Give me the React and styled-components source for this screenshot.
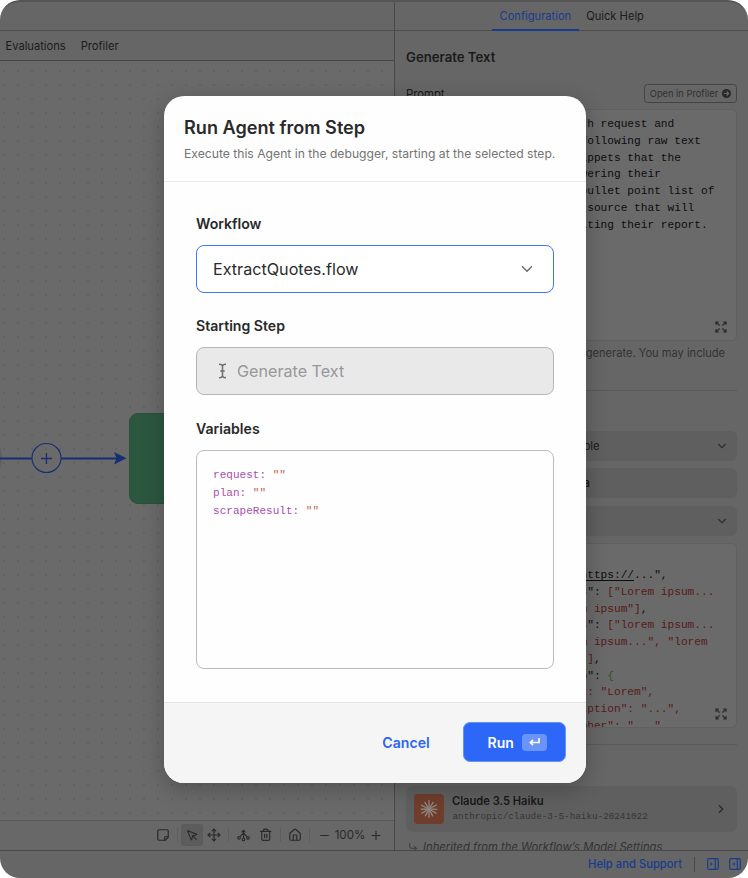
import React from "react";
import styled, { createGlobalStyle, css } from "styled-components";
import {
  ChevronDown, ChevronRight, StickyNote, MousePointer, Move, Trash2, House,
  Minus, Plus, CornerDownRight,
} from "lucide-react";

const Global = createGlobalStyle`
  * { box-sizing: border-box; }
  body { margin: 0; background: #fff; font-family: Inter, sans-serif; color: #181818; }
`;

const mono = css`font-family: "Liberation Mono", monospace; white-space: pre;`;

const Window = styled.div`
  position: relative;
  width: 748px;
  height: 878px;
  display: flex;
  flex-direction: column;
  overflow: hidden;
  border-radius: 20px;
  background: #666;
  border-top: 2px solid #555;
`;
const Columns = styled.div`display: flex; height: 848px;`;
const Left = styled.div`
  width: 395px; display: flex; flex-direction: column;
  border-right: 1px solid #484848;
`;
const TopBar = styled.div`height: 29px; border-bottom: 1px solid #4d4d4d;`;
const NavTabs = styled.nav`
  height: 30px; display: flex; align-items: center; gap: 15px; padding-left: 5.5px;
  border-bottom: 1px solid #484848; font-size: 11.15px; color: #1b1b1b;
`;
const Canvas = styled.div`
  position: relative; flex: 1; overflow: hidden; background-color: #6a6a6a;
  background-image: radial-gradient(circle at 4px 10px, #5f5f5f 0.6px, transparent 1.1px);
  background-size: 14px 14px;
`;
const PrevNode = styled.div`
  position: absolute; left: -58px; top: 367px; width: 60px; height: 60px;
  border-radius: 50%; background: #5f5f5f;
`;
const StepNode = styled.div`
  position: absolute; left: 128.5px; top: 351.5px; width: 91px; height: 91px;
  border-radius: 9px; background: #2c573f; border: 1px solid #28503a;
`;
const Edge = styled.svg`position: absolute; left: 0; top: 377px;`;
const Toolbar = styled.div`
  height: 30px; border-top: 1px solid #585858; display: flex; align-items: center;
  padding-left: 156px; padding-bottom: 1px; color: #292929; font-size: 11.6px; background: #686868;
  svg { display: block; }
`;
const Tool = styled.div`
  width: ${(p) => p.$w || 22}px; height: 22px; display: flex; align-items: center;
  justify-content: center; border-radius: 3px; flex: none;
  margin-left: ${(p) => p.$gap || 0}px;
  background: ${(p) => (p.$active ? "#5c5c5c" : "transparent")};
`;
const NoteIcon = styled(StickyNote)`transform: scaleY(-1);`;
const Sep = styled.div`
  width: 1px; height: 14px; background: #5e5e5e; flex: none;
  margin-left: ${(p) => p.$gap || 0}px;
`;

const Panel = styled.aside`width: 353px; display: flex; flex-direction: column;`;
const PanelTabs = styled.div`
  height: 29px; display: flex; padding-left: 97px; border-bottom: 1px solid #4d4d4d;
  font-size: 11.15px;
`;
const PanelTab = styled.div`
  height: 29px; line-height: 28px; padding: 0 7.5px; white-space: nowrap;
  color: ${(p) => (p.$active ? "#173c8e" : "#1b1b1b")};
  border-bottom: ${(p) => (p.$active ? "2px solid #173c8e" : "none")};
`;
const PanelBody = styled.div`
  height: 819px; overflow: hidden; padding: 0 11px; display: flex; flex-direction: column;
  > * { flex: none; }
`;
const PanelTitle = styled.h2`margin: 17px 0 0; font-size: 13.2px; line-height: 18px; font-weight: 600; color: #1b1b1b;`;
const PromptRow = styled.div`
  margin-top: 18px; height: 18px; display: flex; align-items: center;
  justify-content: space-between; font-size: 11.3px;
`;
const PromptLabel = styled.span`padding-top: 1px;`;
const ProfilerButton = styled.button`
  width: 93px; height: 19px; padding: 0; display: flex; align-items: center; justify-content: center;
  gap: 4px; border: 1px solid #444; border-radius: 3.5px; background: none;
  font: 9.3px Inter, sans-serif; color: #303030; white-space: nowrap;
`;
const Editor = styled.div`
  position: relative; height: ${(p) => p.$h}px; margin-top: ${(p) => p.$mt}px;
  padding: ${(p) => p.$pt}px 0 0 173.5px; overflow: hidden; background: #6a6a6a;
  border: 1px solid #606060; border-radius: 5px;
`;
const CodeLine = styled.div`${mono} height: 16.75px; font-size: 11.17px; line-height: 16.75px; color: #0d0d0d;`;
const ExpandIcon = styled.svg`position: absolute; right: 9px; bottom: 7px;`;
const Help = styled.p`
  margin: 3px 12px 0; text-align: right; font-size: 11.1px; line-height: 18px; color: #333;
`;
const Rule = styled.div`height: 1px; background: #595959; margin-top: ${(p) => p.$mt}px;`;
const Select = styled.div`
  height: 30px; margin-top: ${(p) => p.$mt}px; border-radius: 6px; background: #5f5f5f;
  display: flex; align-items: center; padding: 0 8px 0 177.5px; justify-content: space-between;
  font-size: 11.2px; font-weight: ${(p) => (p.$bold ? 600 : 400)}; color: #1a1a1a;
  svg { color: #303030; }
`;
const Red = styled.span`color: #571b1b;`;
const Green = styled.span`color: #275427;`;
const Link = styled.span`text-decoration: underline; text-underline-offset: 2px;`;
const ModelCard = styled.div`
  height: 46px; margin-top: 41px; border-radius: 7px; background: #5f5f5f;
  display: flex; align-items: center; padding: 0 9px 0 8px;
`;
const Logo = styled.div`
  width: 30px; height: 30px; border-radius: 4px; background: #6f3d2c;
  display: flex; align-items: center; justify-content: center;
`;
const ModelText = styled.div`flex: 1; margin: -1px 0 0 8px;`;
const ModelName = styled.div`font-size: 11.15px; line-height: 15px; font-weight: 600;`;
const ModelId = styled.div`${mono} margin-left: 0.5px; font-size: 9.3px; line-height: 15px; color: #363636;`;
const Inherited = styled.div`
  display: flex; align-items: center; gap: 5px; height: 18px; margin: 6px 0 0 2px;
  font-size: 11.25px; font-style: italic; color: #333;
`;
const StatusBar = styled.footer`
  height: 28px; border-top: 1px solid #484848; display: flex; align-items: center;
  justify-content: flex-end; padding: 0 7px 1px 0; color: #173c8e; font-size: 11.25px; font-weight: 500;
`;
const StatusSep = styled.div`width: 1px; height: 15px; background: #484848; margin: 0 12px 0 12px;`;
const IconGap = styled.div`width: 10px;`;

const Overlay = styled.div`
  position: absolute; inset: -2px 0 0 0; display: flex; align-items: flex-start;
  padding: 96px 0 0 164px;
`;
const Modal = styled.section`
  width: 421.7px; height: 686.7px; border-radius: 20px; overflow: hidden; background: #fefefe;
  display: flex; flex-direction: column; box-shadow: 0 6px 22px rgba(0, 0, 0, 0.24);
`;
const ModalHeader = styled.header`
  height: 86px; padding: 19px 20px 0; border-bottom: 1px solid #e8e8e8;
`;
const Title = styled.h1`margin: 0; font-size: 18.1px; line-height: 24px; font-weight: 600; color: #2a2a2a;`;
const Subtitle = styled.p`margin: 6px 0 0; font-size: 12.17px; line-height: 18px; color: #747474; white-space: nowrap;`;
const Form = styled.div`flex: 1; padding: 31.5px 32.2px 0 32px;`;
const Label = styled.label`
  display: block; margin-top: ${(p) => p.$mt || 0}px; height: 20px; line-height: 20px;
  font-size: 14.1px; font-weight: 600; color: #292929;
`;
const Field = styled.div`
  height: 48px; margin-top: ${(p) => p.$mt}px; padding: 0 17px 0 16px; display: flex; align-items: center;
  border: 1px solid ${(p) => (p.$disabled ? "#b5b5b5" : "#4078f6")}; border-radius: 8px;
  background: ${(p) => (p.$disabled ? "#e9e9e9" : "#fff")};
  color: ${(p) => (p.$disabled ? "#989898" : "#2b2b2b")}; font-size: 16.15px;
  > span { flex: 1; }
`;
const Cursor = styled.svg`margin: 0 9px 0 4px;`;
const Variables = styled.div`
  height: 219px; margin-top: 11.5px; padding: 15px 16px; border: 1px solid #bcbcbc; border-radius: 8px;
  ${mono} font-size: 11.05px; line-height: 18px; color: #aa4fac;
`;
const Value = styled.span`color: #c25f50;`;
const ModalFooter = styled.footer`
  height: 81px; border-top: 1px solid #e6e6e6; background: #f5f5f5;
  display: flex; align-items: center; justify-content: flex-end; padding: 0 20px 1px 0; gap: 33px;
  font-size: 14.1px; font-weight: 600; color: #2c66ee;
`;
const RunButton = styled.button`
  width: 103px; height: 40px; padding: 0 0 0 6px; border: 1px solid #6792fa; border-radius: 7px; background: #2c67f7;
  color: #fff; font: 600 14px Inter, sans-serif; display: flex; align-items: center;
  justify-content: center; gap: 8px;
`;
const Key = styled.span`
  width: 25px; height: 17px; border-radius: 4px; background: #6b94f9; display: flex;
  align-items: center; justify-content: center;
`;

const Expand = () => (
  <ExpandIcon width="12" height="12" viewBox="0 0 12 12" fill="none" stroke="#292929" strokeWidth="1.2">
    <path d="M1 3.800V1h2.800M1 1l3.600 3.600M8.200 1H11v2.800M11 1 7.400 4.600M1 8.200V11h2.800M1 11l3.600-3.600M8.200 11H11V8.200M11 11 7.400 7.400" />
  </ExpandIcon>
);
const Burst = () => (
  <svg width="18" height="18" viewBox="-9 -9 18 18" stroke="#8d8580" strokeWidth="1.4" strokeLinecap="round">
    {[3, 31, 62, 90, 118, 149, 178, 207, 238, 270, 302, 332].map((a, i) => (
      <path key={a} d={`M0 0H${i % 2 ? 8.2 : 7.8}`} transform={`rotate(${a})`} />
    ))}
  </svg>
);
const NodesIcon = () => (
  <svg width="13" height="13" viewBox="0 0 13 13" fill="none" stroke="currentColor" strokeWidth="1.1">
    <path d="M6.5 9V1.600M4.600 3.300l1.900-1.900 1.900 1.900M6.500 4.200 2.900 7.700M6.500 4.200l3.600 3.500" />
    <circle cx="2" cy="8.800" r="1.300" /><circle cx="6.500" cy="10.500" r="1.300" /><circle cx="11" cy="8.800" r="1.300" />
  </svg>
);
const PanelIcon = ({ open }) => (
  <svg width="12" height="12" viewBox="0 0 12 12" fill="none" stroke="currentColor" strokeWidth="1.2">
    <rect x=".7" y=".7" width="10.6" height="10.6" rx="1.2" />
    <path d="M8.300 1v10" />
    <path d={open ? "M5.800 4 3.600 6l2.200 2z" : "M3.600 4l2.200 2-2.200 2z"} fill="currentColor" stroke="none" />
  </svg>
);

export default function App() {
  return (
    <>
      <Global />
      <Window>
        <Columns>
          <Left>
            <TopBar />
            <NavTabs><span>Evaluations</span><span>Profiler</span></NavTabs>
            <Canvas>
              <PrevNode />
              <Edge width="130" height="40" viewBox="0 0 130 40" fill="none" stroke="#152f75">
                <path d="M0 20.5H32M61 20.5H117" strokeWidth="2" />
                <circle cx="46.5" cy="20" r="14.5" strokeWidth="1.1" />
                <path d="M41 20.5h11M46.5 15v11" strokeWidth="1.3" />
                <path d="m114 14 12.5 6.3L114 26.5l2.700-6.200z" fill="#152f75" stroke="none" />
              </Edge>
              <StepNode />
            </Canvas>
            <Toolbar>
              <Tool $w={14}><NoteIcon size={14} /></Tool>
              <Sep $gap={7} />
              <Tool $gap={3} $active><MousePointer size={13} /></Tool>
              <Tool><Move size={14} /></Tool>
              <Sep $gap={3} />
              <Tool $gap={3}><NodesIcon /></Tool>
              <Tool $gap={1}><Trash2 size={13.5} /></Tool>
              <Sep $gap={3} />
              <Tool $gap={3}><House size={14} /></Tool>
              <Sep $gap={3} />
              <Tool $gap={8} $w={13}><Minus size={15} /></Tool>
              <Tool $w={38}>100%</Tool>
              <Tool $w={14}><Plus size={15} /></Tool>
            </Toolbar>
          </Left>
          <Panel>
            <PanelTabs>
              <PanelTab $active>Configuration</PanelTab>
              <PanelTab>Quick Help</PanelTab>
            </PanelTabs>
            <PanelBody>
              <PanelTitle>Generate Text</PanelTitle>
              <PromptRow>
                <PromptLabel>Prompt</PromptLabel>
                <ProfilerButton>
                  Open in Profiler
                  <svg width="9" height="9" viewBox="0 0 9 9">
                    <circle cx="4.5" cy="4.5" r="4.5" fill="#292929" />
                    <path d="M2 4.500h4.600M4.700 2.500l2 2-2 2" fill="none" stroke="#6a6a6a" strokeWidth="1.1" />
                  </svg>
                </ProfilerButton>
              </PromptRow>
              <Editor $h={232} $mt={7} $pt={6}>
                <CodeLine>ch request and</CodeLine>
                <CodeLine>following raw text</CodeLine>
                <CodeLine>ippets that the</CodeLine>
                <CodeLine>wering their</CodeLine>
                <CodeLine>bullet point list of</CodeLine>
                <CodeLine>{" source that will"}</CodeLine>
                <CodeLine>iting their report.</CodeLine>
                <Expand />
              </Editor>
              <Help>generate. You may include</Help>
              <Rule $mt={28} />
              <Select $mt={40}><span>ble</span><ChevronDown size={14} /></Select>
              <Select $mt={7} $bold>a</Select>
              <Select $mt={8}><span /><ChevronDown size={14} /></Select>
              <Editor $h={185} $mt={7} $pt={23}>
                <CodeLine><Link>https://</Link>...",</CodeLine>
                <CodeLine>s": <Red>["Lorem ipsum...</Red></CodeLine>
                <CodeLine><Red>m ipsum"]</Red>,</CodeLine>
                <CodeLine>s": <Red>["lorem ipsum...</Red></CodeLine>
                <CodeLine><Red>m ipsum...", "lorem</Red></CodeLine>
                <CodeLine><Red>"]</Red>,</CodeLine>
                <CodeLine>o": <Green>{"{"}</Green></CodeLine>
                <CodeLine><Red>": "Lorem",</Red></CodeLine>
                <CodeLine><Red>iption": "...",</Red></CodeLine>
                <CodeLine><Red>mber": "...",</Red></CodeLine>
                <Expand />
              </Editor>
              <Rule $mt={16} />
              <ModelCard>
                <Logo><Burst /></Logo>
                <ModelText>
                  <ModelName>Claude 3.5 Haiku</ModelName>
                  <ModelId>anthropic/claude-3-5-haiku-20241022</ModelId>
                </ModelText>
                <ChevronRight size={14} color="#292929" />
              </ModelCard>
              <Inherited><CornerDownRight size={10} />Inherited from the Workflow’s Model Settings</Inherited>
            </PanelBody>
          </Panel>
        </Columns>
        <StatusBar>
          Help and Support
          <StatusSep />
          <PanelIcon />
          <IconGap />
          <PanelIcon open />
        </StatusBar>
        <Overlay>
          <Modal>
            <ModalHeader>
              <Title>Run Agent from Step</Title>
              <Subtitle>Execute this Agent in the debugger, starting at the selected step.</Subtitle>
            </ModalHeader>
            <Form>
              <Label>Workflow</Label>
              <Field $mt={11.5}><span>ExtractQuotes.flow</span><ChevronDown size={18} strokeWidth={1.8} color="#686868" /></Field>
              <Label $mt={23}>Starting Step</Label>
              <Field $mt={11} $disabled>
                <Cursor width="11" height="16" viewBox="0 0 11 16" fill="none" stroke="#6e6e6e" strokeWidth="1.5">
                  <path d="M2 1.200c2 0 3.500.4 3.500 2v9.600c0 1.600-1.500 2-3.500 2M9 1.200c-2 0-3.500.4-3.500 2v9.600c0 1.600 1.500 2 3.500 2M3.300 8h4.400" />
                </Cursor>
                <span>Generate Text</span>
              </Field>
              <Label $mt={23.5}>Variables</Label>
              <Variables>
                {"request: "}<Value>""</Value>{"\nplan: "}<Value>""</Value>{"\nscrapeResult: "}<Value>""</Value>
              </Variables>
            </Form>
            <ModalFooter>
              <span>Cancel</span>
              <RunButton>
                Run
                <Key>
                  <svg width="11" height="10" viewBox="0 0 11 10" fill="none" stroke="#fff" strokeWidth="1.6">
                    <path d="M10 1v4.500H1.500M4 2.900 1.400 5.500 4 8.100" />
                  </svg>
                </Key>
              </RunButton>
            </ModalFooter>
          </Modal>
        </Overlay>
      </Window>
    </>
  );
}
